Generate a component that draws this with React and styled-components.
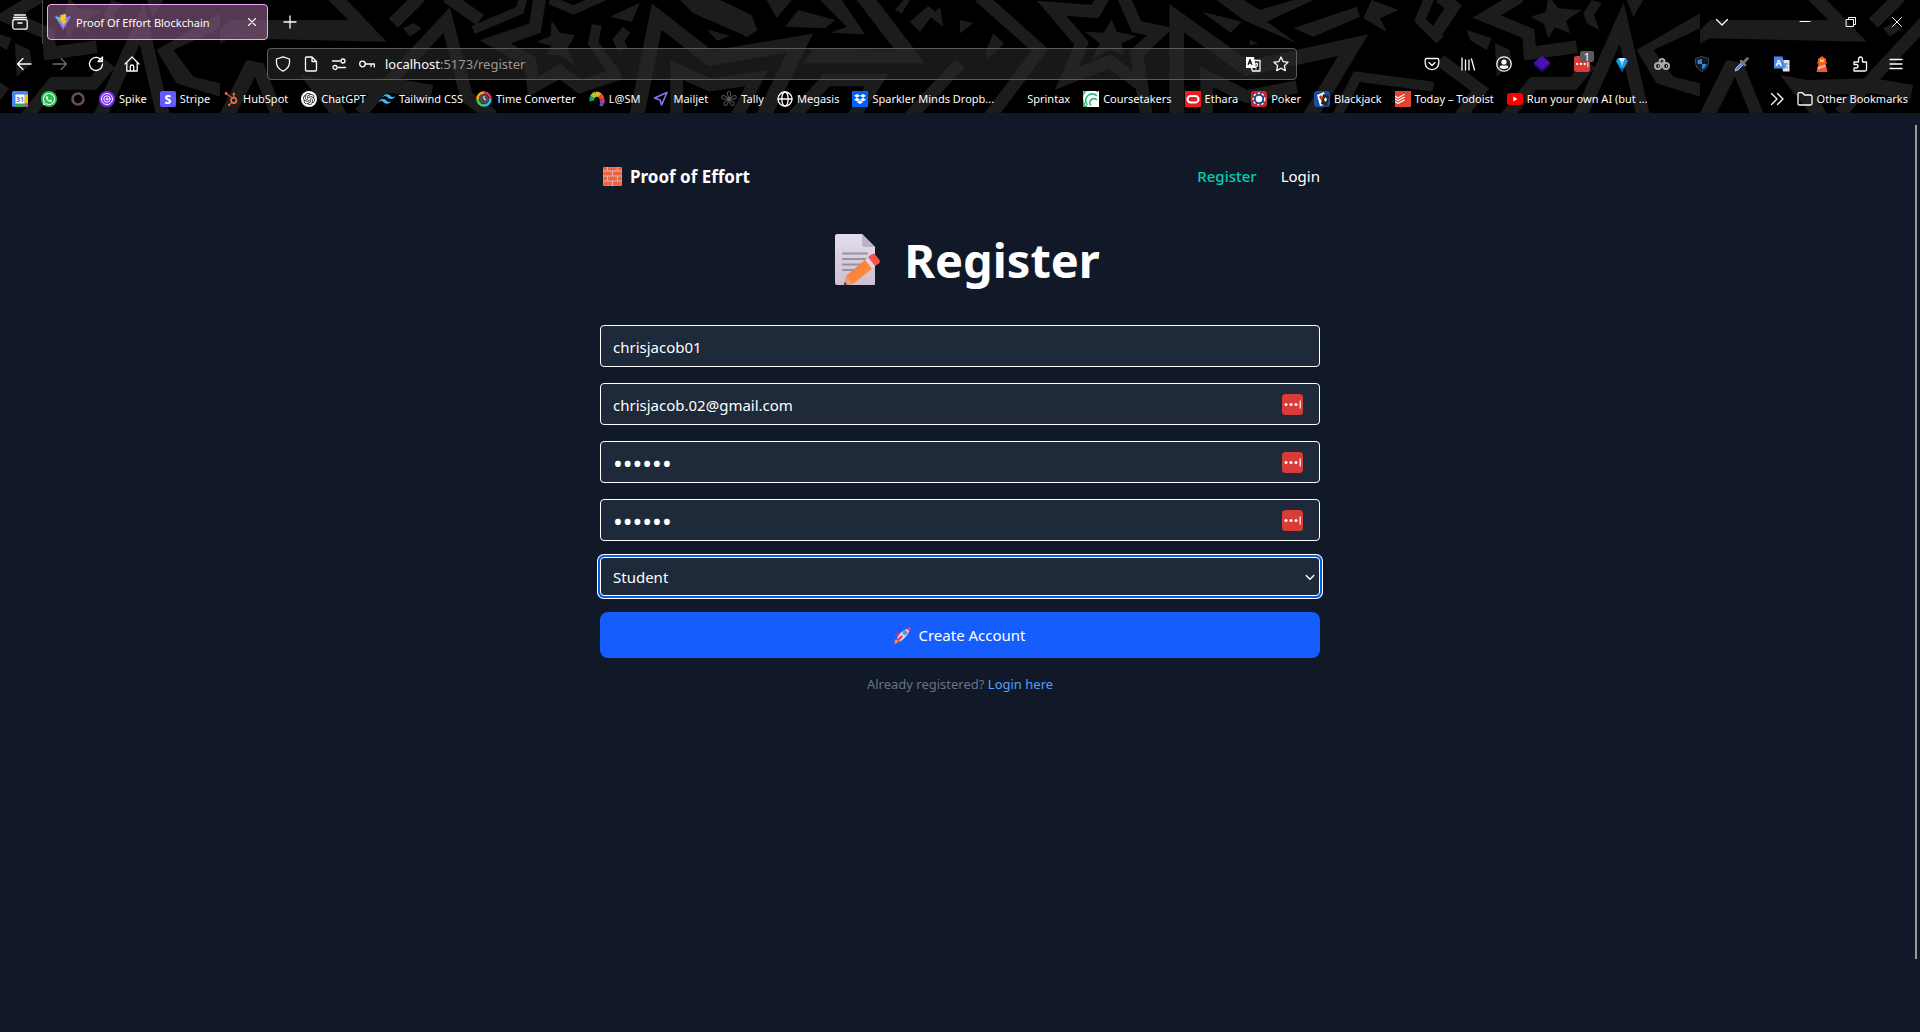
import React, { useState } from "react";
import styled, { createGlobalStyle } from "styled-components";
import { FaWhatsapp, FaHubspot, FaDropbox } from "react-icons/fa";
import { SiOpenai, SiTailwindcss, SiTodoist } from "react-icons/si";

const GlobalStyle = createGlobalStyle`
  *, *::before, *::after { box-sizing: border-box; }
  body { margin: 0; background: #111827; }
  body, button, input, select { font-family: "Noto Sans", "Open Sans", sans-serif; }
  button { border: 0; padding: 0; background: none; color: inherit; cursor: pointer; }
  a { color: inherit; text-decoration: none; }
  svg { display: block; flex: none; }
`;

const Window = styled.div`
  min-height: 100vh;
  display: flex;
  flex-direction: column;
`;

/* ---------- browser chrome ---------- */

const Chrome = styled.header`
  position: relative;
  background: #000;
  color: #fbfbfe;
  font-size: 11px;
  border-bottom: 1px solid #12122a;
  overflow: hidden;
`;

const ThemeLayer = styled.svg`
  position: absolute;
  left: 0;
  top: 0;
  pointer-events: none;
`;

const ChromeRow = styled.div`
  position: relative;
  display: flex;
  align-items: center;
  height: ${(p) => p.$height}px;
  padding: 0 ${(p) => p.$pad || 0}px;
`;

const IconButton = styled.button`
  display: flex;
  align-items: center;
  justify-content: center;
  flex: none;
  width: ${(p) => p.$w || 36}px;
  height: 32px;
  color: ${(p) => (p.$dim ? "#6a6a6a" : "#fbfbfe")};
`;

const TabDivider = styled.span`
  width: 1px;
  height: 44px;
  margin-left: 2px;
  background: #4a4a4a;
`;

const Tab = styled.div`
  display: flex;
  align-items: center;
  gap: 5px;
  width: 221px;
  height: 36px;
  margin: 0 4px;
  padding: 0 7px;
  border: 1px solid #f3a6f3;
  border-radius: 4px;
  background: rgba(130, 86, 125, 0.65);
`;

const TabTitle = styled.span`
  flex: 1;
  white-space: nowrap;
`;

const Fill = styled.span`
  flex: 1;
`;

const Gap = styled.span`
  flex: none;
  width: ${(p) => p.$w}px;
`;

const Spring = styled.span`
  flex: 0 1 117px;
`;

const UrlBar = styled.div`
  flex: 1;
  display: flex;
  align-items: center;
  height: 32px;
  padding: 0 1px;
  border: 1px solid #5c5c5c;
  border-radius: 4px;
  background: rgba(40, 40, 40, 0.6);
`;

const UrlText = styled.span`
  flex: 1;
  padding-left: 4px;
  font-size: 13px;
  color: #9a9a9a;
  b { font-weight: 400; color: #fbfbfe; }
`;

const ExtensionButton = styled(IconButton)`
  position: relative;
`;

const CountBadge = styled.span`
  position: absolute;
  top: 3px;
  right: 8px;
  width: 14px;
  height: 11px;
  border-radius: 2px;
  background: #5b5b5b;
  font-size: 11px;
  line-height: 11px;
`;

const Bookmarks = styled.nav`
  display: flex;
  align-items: center;
  flex: 1;
  gap: 13px;
`;

const Bookmark = styled.a`
  display: flex;
  align-items: center;
  gap: 4px;
  white-space: nowrap;
`;

const Favicon = styled.span`
  display: flex;
  align-items: center;
  justify-content: center;
  flex: none;
  width: 16px;
  height: 16px;
  border-radius: ${(p) => p.$round || 0}px;
  background: ${(p) => p.$bg || "transparent"};
  color: ${(p) => p.$fg || "#fff"};
`;

/* ---------- page ---------- */

const Page = styled.main`
  position: relative;
  flex: 1;
  padding: 40px 0;
  background: #111827;
  color: #fff;
`;

const ScrollThumb = styled.span`
  position: absolute;
  top: 11px;
  right: 3px;
  bottom: 73px;
  width: 2px;
  background: #9b9b9b;
`;

const Column = styled.div`
  max-width: 768px;
  margin: 0 auto;
  padding: 0 24px;
`;

const SiteNav = styled.nav`
  display: flex;
  align-items: center;
  justify-content: space-between;
  height: 44px;
  font-size: 15px;
`;

const Brand = styled.a`
  display: flex;
  align-items: center;
  gap: 8px;
  padding-left: 3px;
  font-size: 17px;
  font-weight: 700;
`;

const NavLinks = styled.div`
  display: flex;
  gap: 24px;
`;

const NavLink = styled.a`
  color: ${(p) => (p.$active ? "#00d0b4" : "#fff")};
  font-weight: ${(p) => (p.$active ? 500 : 400)};
`;

const Title = styled.h1`
  display: flex;
  align-items: center;
  justify-content: center;
  gap: 24px;
  height: 64px;
  margin: 30px 0 33px;
  padding-left: 15px;
  font-size: 47px;
  font-weight: 700;
`;

const Form = styled.form`
  display: flex;
  flex-direction: column;
  gap: 16px;
`;

const Field = styled.div`
  position: relative;
`;

const Input = styled.input`
  display: block;
  width: 100%;
  height: 42px;
  padding: 1px 12px 0;
  border: 1px solid #fff;
  border-radius: 4px;
  outline: 0;
  background: #1e2939;
  color: #fff;
  font-size: ${(p) => (p.type === "password" ? 26 : 15)}px;
`;

const Select = styled.select`
  display: block;
  width: 100%;
  height: 39px;
  padding: 0 12px;
  border: 1px solid #fff;
  border-radius: 4px;
  outline: 0;
  appearance: none;
  background: #1e2939;
  color: #fff;
  font-size: 15px;
  box-shadow: 0 0 0 2px #0060df, 0 0 0 3px #fff;
`;

const FieldAdornment = styled.span`
  position: absolute;
  top: 0;
  bottom: 0;
  right: ${(p) => p.$right}px;
  display: flex;
  align-items: center;
  pointer-events: none;
`;

const Submit = styled.button`
  display: flex;
  align-items: center;
  justify-content: center;
  gap: 7px;
  height: 46px;
  border-radius: 8px;
  background: #155dfc;
  color: #fff;
  font-size: 15px;
`;

const Footnote = styled.p`
  margin: 16px 0 0;
  font-size: 13px;
  line-height: 20px;
  text-align: center;
  color: #6a7282;
  a { color: #51a2ff; }
`;

/* ---------- drawings ---------- */

// One tile of the star pattern; it is drawn at three times its size and repeats every 4440 units.
function ThemeTile() {
  const line = { fill: "none", stroke: "#1c1c1c", strokeWidth: 38, strokeMiterlimit: 10 };
  return (
    <g fill="#1c1c1c">
      <path d="M660 90L690 60H1045L985 0H1040L1160 125L690 115L660 130Z" />
      <path d="M1210 85L1240 70L1265 85L1230 110Z" />
      <path d="M900 225L980 240L1180 235L1300 255L1290 300L1180 280L1010 285L1040 340H990Z" />
      <path d="M660 340L740 180L790 190L850 340H810L765 230L710 340Z" />
      <path {...line} d="M1080 340L1340 60L1400 290L1480 350" />
      <path {...line} d="M1180 70L1260 -10M1340 -10L1440 60" />

      <g transform="translate(1440 0)">
        <path d="M215 62L240 98L285 105L262 145L285 195L240 165L195 165L215 138L170 125L212 108Z" />
        <path {...line} d="M180 -10L165 85L45 125L150 185L160 260L240 215L300 260L420 220" />
        <path {...line} strokeWidth="26" d="M-20 90L120 30L130 -10M210 0L280 30L370 -10" />
        <path {...line} strokeWidth="30" d="M350 75L340 130L400 215M440 90L415 120L430 150" />
        <path {...line} strokeWidth="44" d="M470 350L530 50L690 175L960 130L850 350" />
        <path {...line} d="M590 350L590 210L690 255L830 235L770 350" />
        <path d="M600 0L640 40L790 105L800 112L832 90L815 45L720 0Z" />
        <path d="M390 50L480 8L455 65Z" />
        <path d="M680 88L750 108L712 122Z" />
        <path d="M860 0L890 55L935 0Z" />
        <path d="M915 80L955 30L1065 60L1035 85Z" />
        <path d="M1020 0H1085L1155 103L1050 98L1100 80Z" />
        <path d="M1130 0H1190L1335 190L970 190L1000 145L1245 150Z" />
        <path d="M1245 30L1270 0H1290L1265 40Z" />
        <path d="M1290 65L1345 18L1365 35L1320 95Z" />
        <path d="M1380 20L1390 80L1350 50Z" />
        <path {...line} d="M940 350L1040 240H1190L1120 350M1290 350L1440 190" />
      </g>

      <g transform="translate(2880 0)">
        <path d="M455 58L470 95L530 108L485 130L492 165L450 148L395 180L420 130L375 95L432 98Z" />
        <path {...line} d="M60 -10L240 150L90 350" />
        <path {...line} d="M430 -10L405 35L275 25L365 130L320 235L450 185L550 260" />
        <path {...line} d="M490 -10L530 80L600 95L530 160L560 350" />
        <path {...line} strokeWidth="44" d="M650 350V55L860 205L1180 135L1050 350" />
        <path {...line} d="M740 350V230L860 290L1010 260" />
        <path d="M725 35L845 65L812 98Z" />
        <path d="M770 0H850L900 30L1000 0H1060L920 65L1010 130L850 60Z" />
        <path d="M1000 85L1190 20L1200 50L1060 110Z" />
        <path d="M870 120L895 130L868 136Z" />
        <path d="M1235 0L1210 55L1280 95L1260 55L1315 30Z" />
        <path {...line} strokeWidth="30" d="M1410 -10L1380 60L1440 120M1130 350L1190 230L1420 260" />
        <path d="M75 160L100 100L132 130L85 175Z" />
        <path d="M0 60L40 70L0 100Z" />
      </g>

      <g transform="translate(4320 0)">
        <path d="M325 -12L355 25L425 30L378 62L390 100L345 82L325 115L312 72L272 50L318 36Z" />
        <path {...line} d="M240 -10L140 50L265 100L270 160L410 140" />
        <path d="M430 40L455 0L485 10L462 45L478 90L440 70Z" />
        <path {...line} strokeWidth="40" d="M420 350L545 70L610 350" />
        <path d="M590 150L780 40V85L640 150L700 230L780 250V290L650 250Z" />
        <path d="M560 0H610L580 50Z" />
        <path {...line} d="M-20 110L40 20L0 -10M0 180L120 270L60 350" />
        <path d="M80 90L155 115L140 150L90 120Z" />
        <path d="M165 130L210 150L215 190L170 230Z" />
        <path {...line} d="M200 350L280 250H400L450 190" />
      </g>
    </g>
  );
}

function Theme() {
  return (
    <ThemeLayer width="4000" height="113" viewBox="0 0 12000 339" aria-hidden="true">
      <defs>
        <pattern id="stars" x="660" y="0" width="4440" height="339" patternUnits="userSpaceOnUse">
          <g transform="translate(-660 0)"><ThemeTile /></g>
        </pattern>
      </defs>
      <rect width="12000" height="339" fill="url(#stars)" />
    </ThemeLayer>
  );
}

function Glyph({ size = 16, width = 1.3, children }) {
  return (
    <svg width={size} height={size} viewBox="0 0 16 16" fill="none" stroke="currentColor"
      strokeWidth={width} strokeLinecap="round" strokeLinejoin="round" aria-hidden="true">
      {children}
    </svg>
  );
}

const ViteLogo = () => (
  <svg width="16" height="16" viewBox="0 0 16 16" aria-hidden="true">
    <defs>
      <linearGradient id="vite" x1="0" y1="0" x2="1" y2="1">
        <stop offset="0" stopColor="#41d1ff" /><stop offset="1" stopColor="#bd34fe" />
      </linearGradient>
    </defs>
    <path d="M0 2.2L8 3.6L16 2.2L8.3 16Z" fill="url(#vite)" />
    <path d="M11 0L5.6 1.1L5.2 7.4L7.4 6.9L6.8 9.9L8.6 9.4L7.8 13L12 6L9.7 6.4L11 3.6Z" fill="#ffc61a" />
  </svg>
);

const PasswordBadge = ({ size = 21 }) => (
  <svg width={size} height={size} viewBox="0 0 21 21" aria-hidden="true">
    <rect width="21" height="21" rx="3.5" fill="#d83b38" />
    <circle cx="4" cy="10.5" r="1.5" fill="#fff" />
    <circle cx="9" cy="10.5" r="1.5" fill="#fff" />
    <circle cx="14" cy="10.5" r="1.5" fill="#fff" />
    <rect x="17.6" y="6.5" width="1.2" height="8" fill="#fff" />
  </svg>
);

const Brick = () => (
  <svg width="19" height="19" viewBox="0 0 19 19" aria-hidden="true">
    <rect width="19" height="19" rx="1.5" fill="#c9bccb" />
    <g fill="#f4603a">
      <path d="M1 .3H4V3.4H.3V1ZM5 .3H14V3.4H5ZM15 .3H18L18.7 1V3.4H15Z" />
      <path d="M.3 4.4H9V8.6H.3ZM10 4.4H18.7V8.6H10Z" />
      <path d="M.3 9.6H4V13.6H.3ZM5 9.6H14V13.6H5ZM15 9.6H18.7V13.6H15Z" />
      <path d="M.3 14.6H9V18.7H1L.3 18ZM10 14.6H18.7V18L18 18.7H10Z" />
    </g>
  </svg>
);

const Memo = () => (
  <svg width="45" height="52" viewBox="0 0 45 52" aria-hidden="true">
    <defs>
      <linearGradient id="sheet" x1="0" y1="0" x2="0" y2="1">
        <stop offset="0" stopColor="#e4dcec" /><stop offset="1" stopColor="#cdc0d4" />
      </linearGradient>
      <linearGradient id="pencil" x1="0" y1="0" x2="1" y2="1">
        <stop offset="0" stopColor="#f8703c" /><stop offset="1" stopColor="#ff9b3c" />
      </linearGradient>
    </defs>
    <path d="M2 0H27L40 13V50Q40 51 39 51H2Q0 51 0 49V2Q0 0 2 0Z" fill="url(#sheet)" />
    <path d="M27 0L40 13H29Q27 13 27 11Z" fill="#bdb2c4" />
    <path d="M8 19.500H32M8 25H32M8 30.500H26M8 36H20" stroke="#9a90a3" strokeWidth="2" strokeLinecap="round" />
    <path d="M9 51L11 42L31 25L38 34L18 50Z" fill="url(#pencil)" />
    <path d="M9 51L11 42L18 50Z" fill="#d9a08c" />
    <path d="M9 51L9.700 48L12 50.500Z" fill="#4b2540" />
    <path d="M30 26L34 22.500L40.500 31.500L37 34.500Z" fill="#dcd6ea" />
    <path d="M33 23L36.500 20.500Q39 19 40.500 21L44.500 26Q45.500 28 44 29.500L40 32Z" fill="#f8524a" />
  </svg>
);

const Rocket = () => (
  <svg width="17" height="17" viewBox="0 0 17 17" aria-hidden="true">
    <path d="M1 8L5 5.500L9 9L8 12L7 16L5.500 11.500Z" fill="#e3306a" />
    <path d="M0 17L1 12.500L4.500 12.500L4.500 15.500Z" fill="#f58a2c" />
    <path d="M3 11Q7 3 16 1Q15 9 6 14.500Z" fill="#d8d2e4" />
    <path d="M12.500 1.500L17 0L15.500 5Z" fill="#f23d5e" />
    <path d="M4 13L8 9" stroke="#e3306a" strokeWidth="2" />
    <circle cx="11" cy="5.800" r="2" fill="#3f9be0" stroke="#8a86a0" strokeWidth=".8" />
  </svg>
);

const CalendarIcon = () => (
  <svg width="16" height="16" viewBox="0 0 16 16" aria-hidden="true">
    <rect width="16" height="16" rx="1.500" fill="#4285f4" />
    <path d="M12.500 3.500H16V12.500H12.500Z" fill="#fbbc04" />
    <path d="M3 12.500H12.500V16H3Z" fill="#34a853" />
    <path d="M12.500 12.500H16L12.500 16Z" fill="#ea4335" />
    <rect x="3.500" y="3.500" width="9" height="9" fill="#fff" />
    <text x="8" y="10.800" fontSize="7" fontWeight="700" textAnchor="middle" fill="#4285f4">31</text>
  </svg>
);

const SpikeIcon = () => (
  <Glyph width={1}>
    <circle cx="8" cy="8" r="8" fill="#7a2cf0" stroke="none" />
    <circle cx="8" cy="8" r="5.500" /><circle cx="8" cy="8" r="3.200" /><circle cx="8" cy="8" r="1" />
  </Glyph>
);

const StripeIcon = () => (
  <svg width="16" height="16" viewBox="0 0 16 16" aria-hidden="true">
    <rect width="16" height="16" rx="2" fill="#635bff" />
    <text x="8" y="12.500" fontSize="12" fontWeight="800" textAnchor="middle" fill="#fff">S</text>
  </svg>
);

const ClockIcon = () => (
  <svg width="16" height="16" viewBox="0 0 16 16" fill="none" strokeWidth="2.600" aria-hidden="true">
    <circle cx="8" cy="8" r="5" fill="#4a4a4a" stroke="none" />
    <path d="M8 1.500A6.500 6.500 0 0 1 14.500 8" stroke="#f0285a" />
    <path d="M14.500 8A6.500 6.500 0 0 1 8 14.500" stroke="#20c4f4" />
    <path d="M8 14.500A6.500 6.500 0 0 1 1.500 8" stroke="#3ccf4e" />
    <path d="M1.500 8A6.500 6.500 0 0 1 8 1.500" stroke="#f8a51c" />
    <path d="M8 5V8L10 9" stroke="#fff" strokeWidth="1" />
  </svg>
);

const FanIcon = () => (
  <svg width="16" height="16" viewBox="0 0 16 16" fill="none" strokeWidth="5" aria-hidden="true">
    <path d="M3 10A6 6 0 0 1 3.500 6" stroke="#1fa05a" />
    <path d="M3.500 6A6 6 0 0 1 7 3" stroke="#a3c93a" />
    <path d="M7 3A6 6 0 0 1 11 4.500" stroke="#f0b429" />
    <path d="M11 4.500A6 6 0 0 1 13 8" stroke="#e2483d" />
    <path d="M13 8A8 8 0 0 1 13 12" stroke="#c0368c" />
    <path d="M13 12L12 15" stroke="#4a66c8" strokeWidth="3.500" />
  </svg>
);

const SendIcon = () => (
  <svg width="16" height="16" viewBox="0 0 16 16" fill="none" stroke="#8674f2" strokeWidth="1.600" strokeLinejoin="round" aria-hidden="true">
    <path d="M1.500 7L14 1.500L8.500 14L7 9Z" />
  </svg>
);

const FlowerIcon = () => (
  <svg width="16" height="16" viewBox="0 0 16 16" fill="none" stroke="#575757" strokeWidth="1" aria-hidden="true">
    {[0, 72, 144, 216, 288].map((a) => (
      <path key={a} transform={`rotate(${a} 8 8)`} d="M8 8L6.300 3Q6 .5 8 .5Q10 .5 9.700 3Z" />
    ))}
  </svg>
);

const GlobeIcon = () => (
  <Glyph width={1.3}>
    <circle cx="8" cy="8" r="7" /><ellipse cx="8" cy="8" rx="3.200" ry="7" /><path d="M1 8H15" />
  </Glyph>
);

const CourseIcon = () => (
  <svg width="16" height="16" viewBox="0 0 16 16" fill="none" stroke="#2fc078" strokeWidth="1.700" aria-hidden="true">
    <rect width="16" height="16" fill="#fff" stroke="none" />
    <path d="M1.500 13A9 9 0 0 1 15 1M4.500 14A6.500 6.500 0 0 1 14 5M8 14.500A4 4 0 0 1 14 9" />
    <path d="M0 16V12L5 16Z" fill="#2fc078" stroke="none" />
  </svg>
);

const OracleIcon = () => (
  <svg width="16" height="16" viewBox="0 0 16 16" aria-hidden="true">
    <rect width="16" height="16" fill="#ea1b22" />
    <rect x="2.500" y="5" width="11" height="6.500" rx="3.200" fill="none" stroke="#fff" strokeWidth="2" />
  </svg>
);

const ChipIcon = () => (
  <svg width="16" height="16" viewBox="0 0 16 16" aria-hidden="true">
    <rect width="16" height="16" rx="3" fill="#c4262c" />
    <circle cx="8" cy="8" r="5.500" fill="#1d4f9c" stroke="#fff" strokeWidth="2" strokeDasharray="2.200 1.800" />
    <circle cx="8" cy="8" r="5.200" fill="#1d4f9c" />
    <circle cx="8" cy="8" r="3.200" fill="#fff" />
  </svg>
);

const CardsIcon = () => (
  <svg width="16" height="16" viewBox="0 0 16 16" aria-hidden="true">
    <rect width="16" height="16" rx="3" fill="#164f9f" />
    <path d="M3 4L10 1L13 13L6 15Z" fill="#fff" />
    <path d="M9 3L15 5L13 15L7 13Z" fill="#222" />
    <path d="M5 6L7 4L9 7L7.500 10Z" fill="#d02a34" />
    <path d="M10 8L12 6L13 9L11 11Z" fill="#fff" />
  </svg>
);

const YoutubeIcon = () => (
  <svg width="16" height="16" viewBox="0 0 16 16" aria-hidden="true">
    <rect y="2" width="16" height="12" rx="3" fill="#f00" /><path d="M6.300 5.500L10.500 8L6.300 10.500Z" fill="#fff" />
  </svg>
);

const FolderIcon = () => (
  <Glyph><path d="M1 12.500V3Q1 1.700 2.300 1.700H5.500L7.500 4H13Q15 4 15 5.500V12.500Q15 14 13.500 14H2.500Q1 14 1 12.500Z" /></Glyph>
);

const translatePaths = (
  <>
    <path d="M1 1H9L11 12H1Z" fill="currentColor" stroke="none" />
    <path d="M10 4.500H15V15H7.500L6.500 12" />
    <path d="M3.200 8.500L5 3.500L6.800 8.500M3.900 7H6.100" stroke="#1b1b1b" />
    <path d="M10.500 8Q12.500 6.500 12.500 8.500Q12.500 10 11 11M11 13V13" />
  </>
);

const bookmarks = [
  ["", <Favicon><CalendarIcon /></Favicon>, "Calendar"],
  ["", <Favicon $bg="#25c04f" $round={8}><FaWhatsapp size={14} /></Favicon>, "WhatsApp"],
  ["", <Favicon $fg="#6b4a66"><Glyph width={2.6}><circle cx="8" cy="8" r="5.500" /></Glyph></Favicon>, "Ring"],
  ["Spike", <Favicon><SpikeIcon /></Favicon>],
  ["Stripe", <Favicon><StripeIcon /></Favicon>],
  ["HubSpot", <Favicon $fg="#f0714f"><FaHubspot size={14} /></Favicon>],
  ["ChatGPT", <Favicon $bg="#fff" $fg="#222" $round={8}><SiOpenai size={12} /></Favicon>],
  ["Tailwind CSS", <Favicon $fg="#38bdf8"><SiTailwindcss size={16} /></Favicon>],
  ["Time Converter", <Favicon><ClockIcon /></Favicon>],
  ["L@SM", <Favicon><FanIcon /></Favicon>],
  ["Mailjet", <Favicon><SendIcon /></Favicon>],
  ["Tally", <Favicon><FlowerIcon /></Favicon>],
  ["Megasis", <Favicon><GlobeIcon /></Favicon>],
  ["Sparkler Minds Dropb...", <Favicon $bg="#0061fe"><FaDropbox size={12} /></Favicon>],
  ["Sprintax", <Favicon />],
  ["Coursetakers", <Favicon><CourseIcon /></Favicon>],
  ["Ethara", <Favicon><OracleIcon /></Favicon>],
  ["Poker", <Favicon><ChipIcon /></Favicon>],
  ["Blackjack", <Favicon><CardsIcon /></Favicon>],
  ["Today – Todoist", <Favicon $bg="#fff" $fg="#e44332" $round={2}><SiTodoist size={16} /></Favicon>],
  ["Run your own AI (but ...", <Favicon><YoutubeIcon /></Favicon>],
];

const extensions = [
  ["Gem", <svg width="16" height="16" viewBox="0 0 16 16"><path d="M8 0L16 6.500V9L8 16L0 9V6.500Z" fill="#2c0a86" /><path d="M8 0L16 6.500L8 13L0 6.500Z" fill="#4a12b4" /></svg>],
  ["Passwords", <><PasswordBadge size={16} /><CountBadge>1</CountBadge></>],
  ["Diamond", <svg width="12" height="15" viewBox="0 0 12 15"><path d="M2 1H10L12 4L6 15L0 4Z" fill="#1496e8" /><path d="M3 1H9L8 4H4Z" fill="#d8f2ff" /><path d="M4 4H8L6 10Z" fill="#7fd0fa" /><path d="M4 11L6 15L8 11Z" fill="#0a4f9a" /></svg>],
  ["Swirl", <svg width="16" height="16" viewBox="0 0 16 16" fill="none" stroke="#a9a9a9" strokeWidth="2"><circle cx="8" cy="5.500" r="2.500" /><circle cx="4" cy="10" r="3" /><circle cx="12" cy="10" r="3" /><path d="M8 6Q11 8 8 11M4 10H5M12 10H13" /></svg>],
  ["Shield", <svg width="14" height="16" viewBox="0 0 14 16"><path d="M7 .5L13.500 2.500V7Q13 12.500 7 15.500Q1 12.500 .5 7V2.500Z" fill="#101820" stroke="#3a4650" /><path d="M7 3V8H2.500V4Z" fill="#2d86d8" /><path d="M7 8H11.500Q11 11.500 7 13.500Z" fill="#2d86d8" /></svg>],
  ["Dropper", <svg width="16" height="16" viewBox="0 0 16 16"><path d="M1 15L2 12L8 6L10 8L4 14Z" fill="#5f7fe0" stroke="#c8d0e8" strokeWidth=".8" /><path d="M7 5L11 9M9 7L13.500 2.500" stroke="#7a7a7a" strokeWidth="2.500" strokeLinecap="round" /></svg>],
  ["Translate", <svg width="16" height="16" viewBox="0 0 16 16"><path d="M7 4H15.500V15.500H9Z" fill="#dfe3ea" /><path d="M9.500 8H14M12 7V8Q11.500 11 9.500 12M10.500 9Q12 11.500 14 12" stroke="#5a7fc0" fill="none" /><path d="M0 .5H8.500L11.500 12.500H0Z" fill="#4a88f2" /><text x="4.700" y="10" fontSize="9" fontWeight="700" textAnchor="middle" fill="#fff">A</text></svg>],
  ["Lighthouse", <svg width="14" height="16" viewBox="0 0 14 16"><path d="M7 0L11 3V6H12V7.500H10.500L12.500 16H1.500L3.500 7.500H2V6H3V3Z" fill="#f2592b" /><path d="M5 3.500H9V6H5Z" fill="#ffd24a" /><path d="M3 11L10 8.500L10.800 10.500L2.500 13.500Z" fill="#ffb59a" /></svg>],
];

function BrowserChrome() {
  return (
    <Chrome>
      <Theme />
      <ChromeRow $height={44}>
        <IconButton $w={40} aria-label="Firefox View">
          <Glyph><path d="M2.500 1H13.500M1.500 3.500H14.500" /><rect x=".8" y="5.500" width="14.400" height="9.700" rx="2" /><path d="M6 9H10" /></Glyph>
        </IconButton>
        <TabDivider />
        <Tab>
          <ViteLogo />
          <TabTitle>Proof Of Effort Blockchain</TabTitle>
          <IconButton $w={16} aria-label="Close tab"><Glyph size={14}><path d="M4 4L12 12M12 4L4 12" /></Glyph></IconButton>
        </Tab>
        <IconButton aria-label="New tab"><Glyph><path d="M8 2V14M2 8H14" /></Glyph></IconButton>
        <Fill />
        <IconButton $w={32} aria-label="List all tabs"><Glyph><path d="M2.500 5.500L8 11L13.500 5.500" /></Glyph></IconButton>
        <Gap $w={44} />
        <IconButton $w={46} aria-label="Minimize"><Glyph width={1}><path d="M3 7.500H13" /></Glyph></IconButton>
        <IconButton $w={46} aria-label="Restore"><Glyph width={1}><rect x="3.500" y="5.500" width="7" height="7" /><path d="M5.500 5.500V3.500H12.500V10.500H10.500" /></Glyph></IconButton>
        <IconButton $w={46} aria-label="Close"><Glyph width={1}><path d="M3.500 3.500L12.500 12.500M12.500 3.500L3.500 12.500" /></Glyph></IconButton>
      </ChromeRow>

      <ChromeRow $height={40} $pad={6}>
        <IconButton aria-label="Back"><Glyph><path d="M15 8H1.500M7 2.500L1.500 8L7 13.500" /></Glyph></IconButton>
        <IconButton $dim aria-label="Forward"><Glyph><path d="M1 8H14.500M9 2.500L14.500 8L9 13.500" /></Glyph></IconButton>
        <IconButton aria-label="Reload"><Glyph><path d="M13.500 4.500A6.500 6.500 0 1 0 14.500 8M14.500 1V5.500H10Z" /></Glyph></IconButton>
        <IconButton aria-label="Home"><Glyph><path d="M1 8L8 1L15 8M2.800 6.500V15H13.200V6.500M6.300 15V10.500Q6.300 9 8 9Q9.700 9 9.700 10.500V15" /></Glyph></IconButton>
        <Spring />
        <UrlBar>
          <IconButton $w={28} aria-label="Tracking protection"><Glyph><path d="M8 .8L14.500 3V7Q14 12.500 8 15.200Q2 12.500 1.500 7V3Z" /></Glyph></IconButton>
          <IconButton $w={28} aria-label="Page info"><Glyph><path d="M2.500 14V2Q2.500 1 3.500 1H9L13.500 5.500V14Q13.500 15 12.500 15H3.500Q2.500 15 2.500 14ZM9 1V5.500H13.500" /></Glyph></IconButton>
          <IconButton $w={28} aria-label="Permissions"><Glyph><path d="M1.500 5H9M7 11.500H14.500" /><circle cx="12" cy="5" r="2" /><circle cx="4" cy="11.500" r="2" /></Glyph></IconButton>
          <IconButton $w={28} aria-label="Saved logins"><Glyph><circle cx="3.500" cy="8" r="2.800" /><path d="M6.300 8H15.300V11M12 8V10.500" /></Glyph></IconButton>
          <UrlText><b>localhost</b>:5173/register</UrlText>
          <IconButton $w={28} aria-label="Translate page"><Glyph>{translatePaths}</Glyph></IconButton>
          <IconButton $w={28} aria-label="Bookmark page"><Glyph><path d="M8 1L10.100 5.600L15 6.200L11.400 9.600L12.300 14.600L8 12.200L3.700 14.600L4.600 9.600L1 6.200L5.900 5.600Z" /></Glyph></IconButton>
        </UrlBar>
        <Spring />
        <IconButton aria-label="Pocket"><Glyph><path d="M2.500 2.500H13.500Q14.800 2.500 14.800 4V7Q14.500 13 8 13.700Q1.500 13 1.200 7V4Q1.200 2.500 2.500 2.500ZM5 6.500L8 9.500L11 6.500" /></Glyph></IconButton>
        <IconButton aria-label="Library"><Glyph><path d="M2 2V14M5.500 4V14M9 4V14M11.500 3L14.500 14" /></Glyph></IconButton>
        <IconButton aria-label="Account"><Glyph><circle cx="8" cy="8" r="7.200" /><circle cx="8" cy="6" r="2.600" fill="currentColor" stroke="none" /><path d="M3.500 11.500Q3.500 9.500 5.500 9.500H10.500Q12.500 9.500 12.500 11.500Q8 14.500 3.500 11.500Z" fill="currentColor" stroke="none" /></Glyph></IconButton>
        {extensions.map(([name, icon]) => (
          <ExtensionButton key={name} $w={40} aria-label={name}>{icon}</ExtensionButton>
        ))}
        <IconButton aria-label="Extensions"><Glyph><path d="M2 15H13Q14.500 15 14.500 13.500V6H10.500V3.500Q10.500 1 8.500 1Q6.500 1 6.500 3.500V6H2V8.500H4Q6 8.500 6 10.200Q6 12 4 12H2Z" /></Glyph></IconButton>
        <IconButton aria-label="Menu"><Glyph><path d="M2 3.500H14M2 8H14M2 12.500H14" /></Glyph></IconButton>
      </ChromeRow>

      <ChromeRow $height={29} $pad={12}>
        <Bookmarks aria-label="Bookmarks">
          {bookmarks.map(([text, icon, name]) => (
            <Bookmark key={text || name} href="#" aria-label={text || name}>{icon}{text}</Bookmark>
          ))}
        </Bookmarks>
        <IconButton $w={28} aria-label="More bookmarks"><Glyph><path d="M2.500 2.500L8 8L2.500 13.500M8.500 2.500L14 8L8.500 13.500" /></Glyph></IconButton>
        <Gap $w={6} />
        <Bookmark href="#"><FolderIcon />Other Bookmarks</Bookmark>
      </ChromeRow>
    </Chrome>
  );
}

function TextField({ label, badge, ...rest }) {
  return (
    <Field>
      <Input aria-label={label} {...rest} />
      {badge && <FieldAdornment $right={17}><PasswordBadge /></FieldAdornment>}
    </Field>
  );
}

export default function App() {
  const [role, setRole] = useState("Student");
  return (
    <Window>
      <GlobalStyle />
      <BrowserChrome />
      <Page>
        <Column>
          <SiteNav>
            <Brand href="#"><Brick />Proof of Effort</Brand>
            <NavLinks>
              <NavLink $active href="#register">Register</NavLink>
              <NavLink href="#login">Login</NavLink>
            </NavLinks>
          </SiteNav>
          <Title><Memo />Register</Title>
          <Form onSubmit={(e) => e.preventDefault()}>
            <TextField label="Username" type="text" defaultValue="chrisjacob01" />
            <TextField label="Email" type="email" defaultValue="chrisjacob.02@gmail.com" badge />
            <TextField label="Password" type="password" defaultValue="secret" badge />
            <TextField label="Confirm password" type="password" defaultValue="secret" badge />
            <Field>
              <Select aria-label="Role" value={role} onChange={(e) => setRole(e.target.value)}>
                <option>Student</option>
              </Select>
              <FieldAdornment $right={4}>
                <Glyph size={12} width={2}><path d="M3 6L8 11L13 6" /></Glyph>
              </FieldAdornment>
            </Field>
            <Submit type="submit"><Rocket />Create Account</Submit>
          </Form>
          <Footnote>Already registered? <a href="#login">Login here</a></Footnote>
        </Column>
        <ScrollThumb />
      </Page>
    </Window>
  );
}
